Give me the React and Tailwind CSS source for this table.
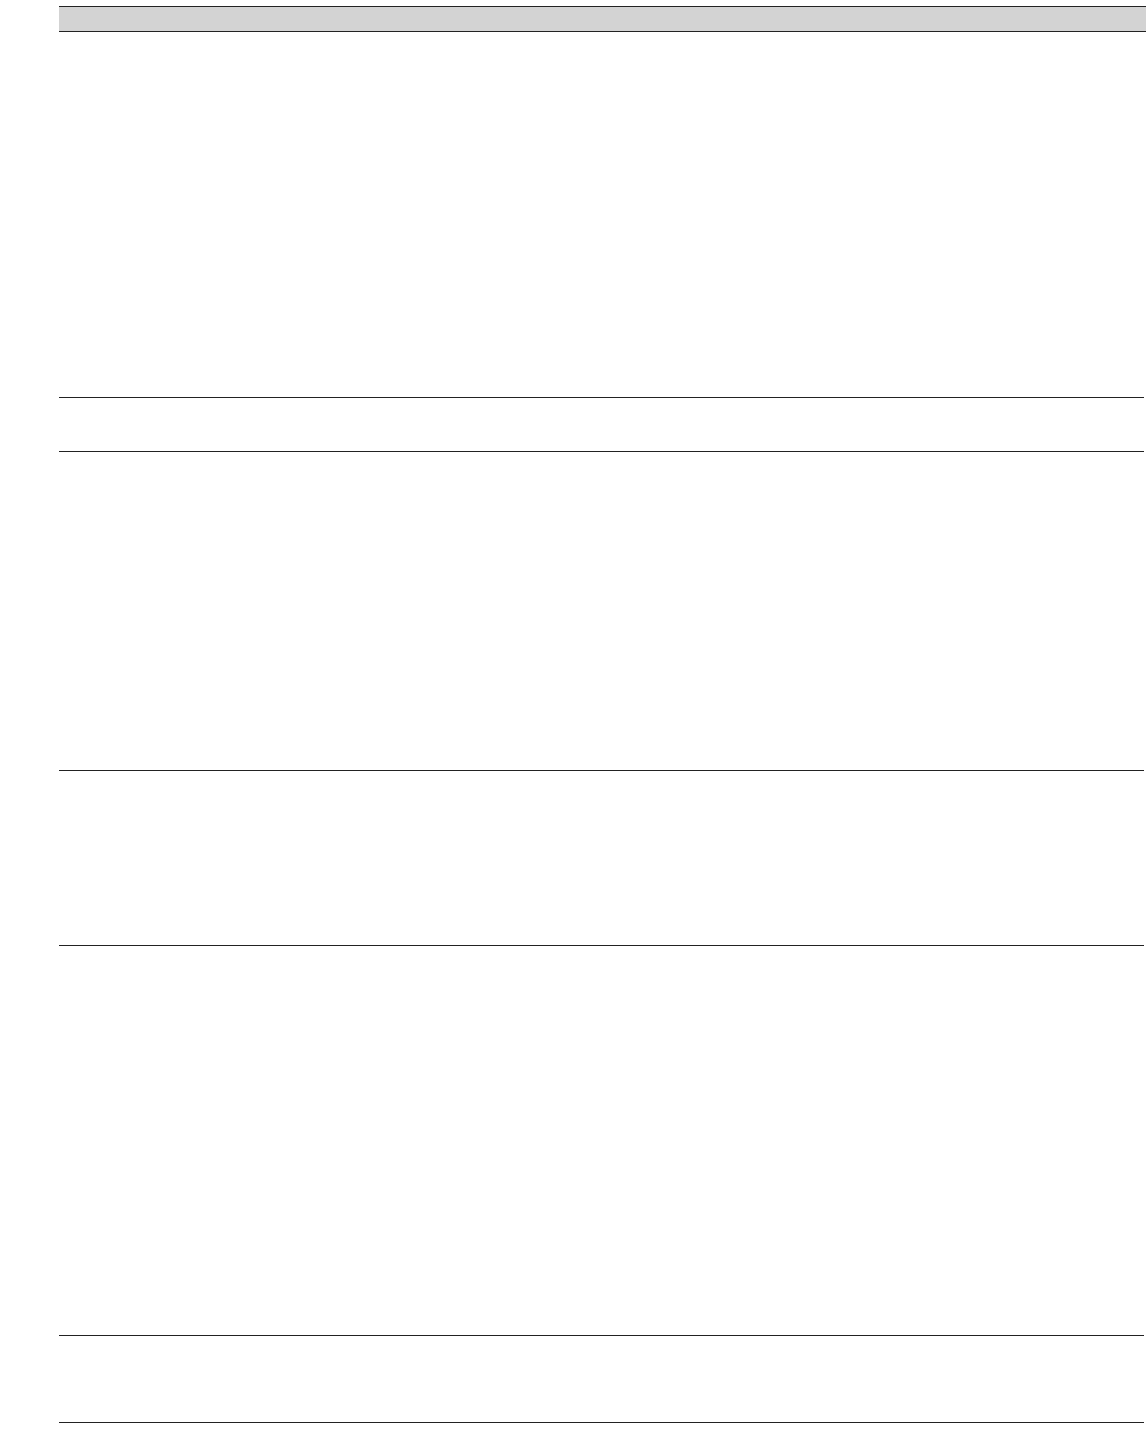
export default function App() {
  const rows = [366, 54, 319, 175, 390, 87];
  return (
    <div className="min-h-[1429px] bg-white pt-[6px] pl-[59px]" style={{ fontFamily: '"Liberation Sans", Arial, sans-serif' }}>
      <div className="w-[1087px] h-[26px] border-y border-[#222222] bg-[#d3d3d3]" />
      <div className="flex flex-col w-[1085px]">
        <div className="h-[366px] border-b border-[#222222]" />
        <div className="h-[54px] border-b border-[#222222]" />
        <div className="h-[319px] border-b border-[#222222]" />
        <div className="h-[175px] border-b border-[#222222]" />
        <div className="h-[390px] border-b border-[#222222]" />
        <div className="h-[87px] border-b border-[#222222]" />
      </div>
    </div>
  );
}
